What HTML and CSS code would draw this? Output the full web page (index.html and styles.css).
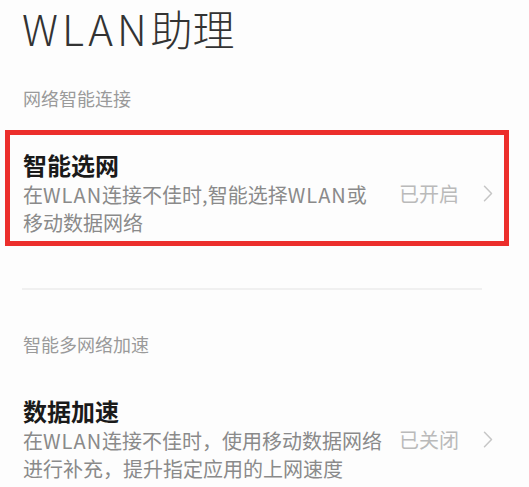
FILE: index.html
```html
<!DOCTYPE html>
<html lang="zh-CN">
<head>
<meta charset="utf-8">
<title>WLAN助理</title>
<link rel="stylesheet" href="styles.css">
</head>
<body>
<div class="page">
  <h1 class="title"><span class="title-latin">WLAN</span>助理</h1>
  <div class="section-label">网络智能连接</div>
  <div class="item item-highlight">
    <div class="item-text">
      <div class="item-title">智能选网</div>
      <div class="item-desc">在<span class="latin">WLAN</span>连接不佳时,智能选择<span class="latin">WLAN</span>或<br>移动数据网络</div>
    </div>
    <div class="item-status">
      <span>已开启</span>
      <svg class="chev" width="10" height="17" viewBox="0 0 10 17"><path d="M1.5 1.2 L8.5 8.5 L1.5 15.8" fill="none" stroke="#c6c6c6" stroke-width="1.5" stroke-linecap="round" stroke-linejoin="round"/></svg>
    </div>
  </div>
  <div class="divider"></div>
  <div class="section-label section-label-2">智能多网络加速</div>
  <div class="item item-2">
    <div class="item-text">
      <div class="item-title">数据加速</div>
      <div class="item-desc">在<span class="latin">WLAN</span>连接不佳时，使用移动数据网络<br>进行补充，提升指定应用的上网速度</div>
    </div>
    <div class="item-status">
      <span>已关闭</span>
      <svg class="chev" width="10" height="17" viewBox="0 0 10 17"><path d="M1.5 1.2 L8.5 8.5 L1.5 15.8" fill="none" stroke="#c6c6c6" stroke-width="1.5" stroke-linecap="round" stroke-linejoin="round"/></svg>
    </div>
  </div>
</div>
</body>
</html>
```

FILE: styles.css
```css
html, body {
  margin: 0;
  padding: 0;
  background: #fdfdfd;
}
body {
  font-family: "Noto Sans CJK SC", "Noto Sans", sans-serif;
  color: #222;
}
.page {
  padding: 0 0 0 5px;
}
.title {
  margin: 0;
  padding: 0 0 0 17px;
  font-size: 42px;
  font-weight: 300;
  line-height: 56px;
  color: #333;
}
.title-latin {
  letter-spacing: 4px;
}
.section-label {
  margin-top: 30px;
  padding-left: 18px;
  font-size: 18px;
  line-height: 24px;
  color: #9a9a9a;
}
.item {
  display: flex;
  align-items: center;
  width: 504px;
  box-sizing: border-box;
  border: 5px solid transparent;
  padding: 14px 0 4px 13px;
}
.item-highlight {
  margin-top: 20px;
  border-color: #ec2f2c;
}
.item-2 {
  padding-top: 34px;
}
.item-text {
  flex: 1;
}
.item-title {
  font-size: 24px;
  font-weight: 700;
  line-height: 32px;
  color: #1a1a1a;
}
.item-desc {
  font-size: 20px;
  line-height: 28px;
  color: #8a8a8a;
}
.latin {
  letter-spacing: 1px;
}
.item-status {
  display: flex;
  align-items: center;
  gap: 24px;
  padding-right: 11px;
  font-size: 20px;
  color: #bababa;
}
.chev {
  display: block;
}
.divider {
  margin: 42px 0 0 17px;
  width: 460px;
  height: 2px;
  background: #f0f0f0;
}
.section-label-2 {
  margin-top: 42px;
}
```
